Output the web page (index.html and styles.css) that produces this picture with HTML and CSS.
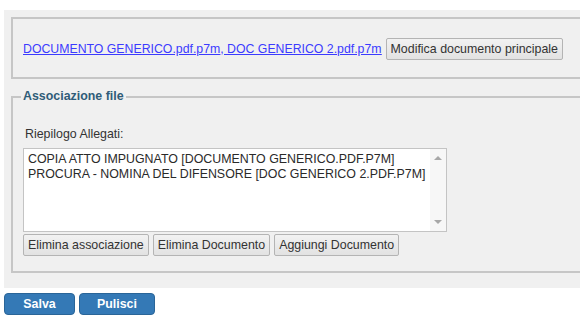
FILE: index.html
```html
<!DOCTYPE html>
<html lang="it">
<head>
	<meta charset="UTF-8">
	<title>Associazione file</title>
	<link rel="stylesheet" href="styles.css">
</head>
<body>
	<div id="wrapper">
		<div class="panel">
			<fieldset class="box docBox">
				<span class="docLinks"><a href="#">DOCUMENTO GENERICO.pdf.p7m</a>, <a href="#">DOC GENERICO 2.pdf.p7m</a></span>
				<button class="btn">Modifica documento principale</button>
			</fieldset>

			<fieldset class="box assocBox">
				<legend>Associazione file</legend>
				<div class="label">Riepilogo Allegati:</div>
				<div class="listbox">
					<div class="items">
						<div>COPIA ATTO IMPUGNATO [DOCUMENTO GENERICO.PDF.P7M]</div>
						<div>PROCURA - NOMINA DEL DIFENSORE [DOC GENERICO 2.PDF.P7M]</div>
					</div>
					<div class="scrollbar">
						<span class="arrow up"></span>
						<span class="arrow down"></span>
					</div>
				</div>
				<div class="actions">
					<button class="btn">Elimina associazione</button>
					<button class="btn">Elimina Documento</button>
					<button class="btn">Aggiungi Documento</button>
				</div>
			</fieldset>
		</div>

		<div class="footer">
			<button class="btnBlue salva">Salva</button>
			<button class="btnBlue pulisci">Pulisci</button>
		</div>
	</div>
</body>
</html>
```

FILE: styles.css
```css
body {
	margin: 0;
	background-color: #fff;
	font-family: "Liberation Sans", Arial, sans-serif;
	font-size: 12.4px;
	color: #333;
}
#wrapper {
	padding: 10px 0 0 4px;
}
.panel {
	background-color: #f0f0f0;
	width: 576px;
	overflow: hidden;
	padding: 7px 0 0 7px;
	box-sizing: border-box;
	height: 278px;
}
.box {
	margin: 0;
	width: 600px;
	border: 2px solid #c6c6c6;
	border-right: none;
	box-sizing: border-box;
}
.docBox {
	height: 62px;
	padding: 1px 0 0 10px;
	display: flex;
	align-items: center;
}
.docLinks {
	font-size: 12.3px;
	color: #3b3bff;
	text-decoration: underline;
	line-height: 14px;
}
.docLinks a {
	color: #3b3bff;
}
.docBox .btn {
	margin-left: 4px;
}
.assocBox {
	margin-top: 11px;
	padding: 0 0 17px 10px;
	height: 183px;
}
legend {
	padding: 0 2px;
	margin-left: -2px;
	font-weight: bold;
	color: #2f5c78;
	line-height: 13px;
}
.label {
	margin: 24px 0 0 2px;
	line-height: 14px;
}
.listbox {
	display: flex;
	width: 424px;
	height: 84px;
	margin-top: 7px;
	border: 1px solid #c4c4c4;
	box-sizing: border-box;
	background-color: #fff;
}
.items {
	flex: 1;
	padding: 3px 4px;
	line-height: 15px;
	color: #2a2a2a;
}
.scrollbar {
	width: 16px;
	background-color: #f7f7f7;
	display: flex;
	flex-direction: column;
	justify-content: space-between;
	align-items: center;
	padding: 7px 0;
	box-sizing: border-box;
}
.arrow {
	width: 0;
	height: 0;
	border-left: 4px solid transparent;
	border-right: 4px solid transparent;
}
.arrow.up {
	border-bottom: 4px solid #a8a8a8;
}
.arrow.down {
	border-top: 4px solid #a8a8a8;
}
.actions {
	display: flex;
	gap: 4px;
	margin-top: 2px;
}
.btn {
	font-family: "Liberation Sans", Arial, sans-serif;
	font-size: 12.4px;
	color: #333;
	height: 22px;
	padding: 0 4px;
	border: 1px solid #b4b4b4;
	border-radius: 2px;
	background: linear-gradient(#f2f2f2, #e2e2e2);
}
.footer {
	display: flex;
	gap: 4px;
	margin-top: 5px;
}
.btnBlue {
	font-family: "Liberation Sans", Arial, sans-serif;
	font-size: 12.4px;
	font-weight: bold;
	color: #fff;
	height: 22px;
	border: 1px solid #2a6598;
	border-radius: 4px;
	background-color: #3479b6;
}
.salva {
	width: 71px;
}
.pulisci {
	width: 76px;
}
```
